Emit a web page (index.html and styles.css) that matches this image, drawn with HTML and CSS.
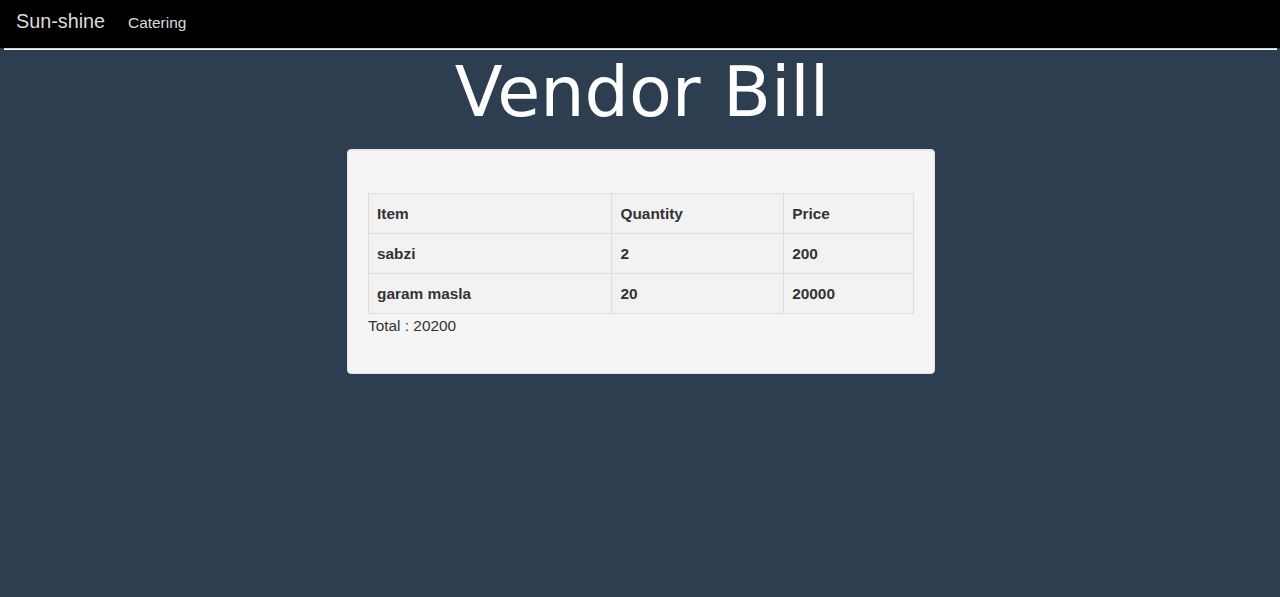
FILE: index.html
```html
<!DOCTYPE html>
<html lang="en">
<head>
<meta charset="utf-8">
<title>Vendor Bill</title>
<link rel="stylesheet" href="styles.css">
</head>
<body>
<nav class="navbar">
  <a class="brand" href="#">Sun-shine</a>
  <a class="nav-link" href="#">Catering</a>
</nav>
<div class="rule"></div>
<h1 class="title">Vendor Bill</h1>
<div class="well">
  <table class="bill">
    <thead>
      <tr><th class="c-item">Item</th><th class="c-qty">Quantity</th><th class="c-price">Price</th></tr>
    </thead>
    <tbody>
      <tr><th>sabzi</th><th>2</th><th>200</th></tr>
      <tr><th>garam masla</th><th>20</th><th>20000</th></tr>
    </tbody>
  </table>
  <div class="total">Total : 20200</div>
</div>
</body>
</html>
```
FILE: styles.css
```css
html, body {
  margin: 0;
  padding: 0;
}
body {
  background: #2c3e50;
  font-family: "Liberation Sans", Arial, sans-serif;
  font-size: 15.4px;
  color: #333;
  min-height: 597px;
}
.navbar {
  background: #000;
  height: 48px;
  box-sizing: border-box;
  padding: 10px 0 0 16px;
  display: flex;
  align-items: baseline;
  gap: 23px;
}
.navbar a {
  text-decoration: none;
  color: #dcdcdc;
}
.brand {
  font-size: 19.8px;
  line-height: 22px;
}
.nav-link {
  font-size: 15.4px;
  line-height: 22px;
}
.rule {
  height: 2px;
  margin: 0 3px 0 4px;
  background: linear-gradient(#d4d4d4 0 1px, #f4f4f4 1px 2px);
}
.title {
  margin: 0;
  padding-left: 4px;
  font-family: "DejaVu Sans", Verdana, sans-serif;
  font-weight: normal;
  font-size: 70px;
  line-height: 84px;
  color: #fff;
  text-align: center;
}
.well {
  width: 588px;
  box-sizing: border-box;
  margin: 15px 0 0 347px;
  padding: 43px 20px 36px 20px;
  background: #f5f5f5;
  border: 1px solid #e3e3e3;
  border-radius: 4px;
  box-shadow: inset 0 1px 1px rgba(0,0,0,0.05);
}
.bill {
  width: 546px;
  border-collapse: collapse;
  background: #f2f2f2;
}
.bill th {
  border: 1px solid #ddd;
  height: 40px;
  box-sizing: border-box;
  padding: 0 9px 0 8px;
  text-align: left;
  font-weight: bold;
  font-size: 15.4px;
  line-height: 22px;
  vertical-align: middle;
}
.c-item { width: 244px; }
.c-qty { width: 172px; }
.c-price { width: 130px; }
.total {
  padding-top: 1px;
  line-height: 22px;
}
```
